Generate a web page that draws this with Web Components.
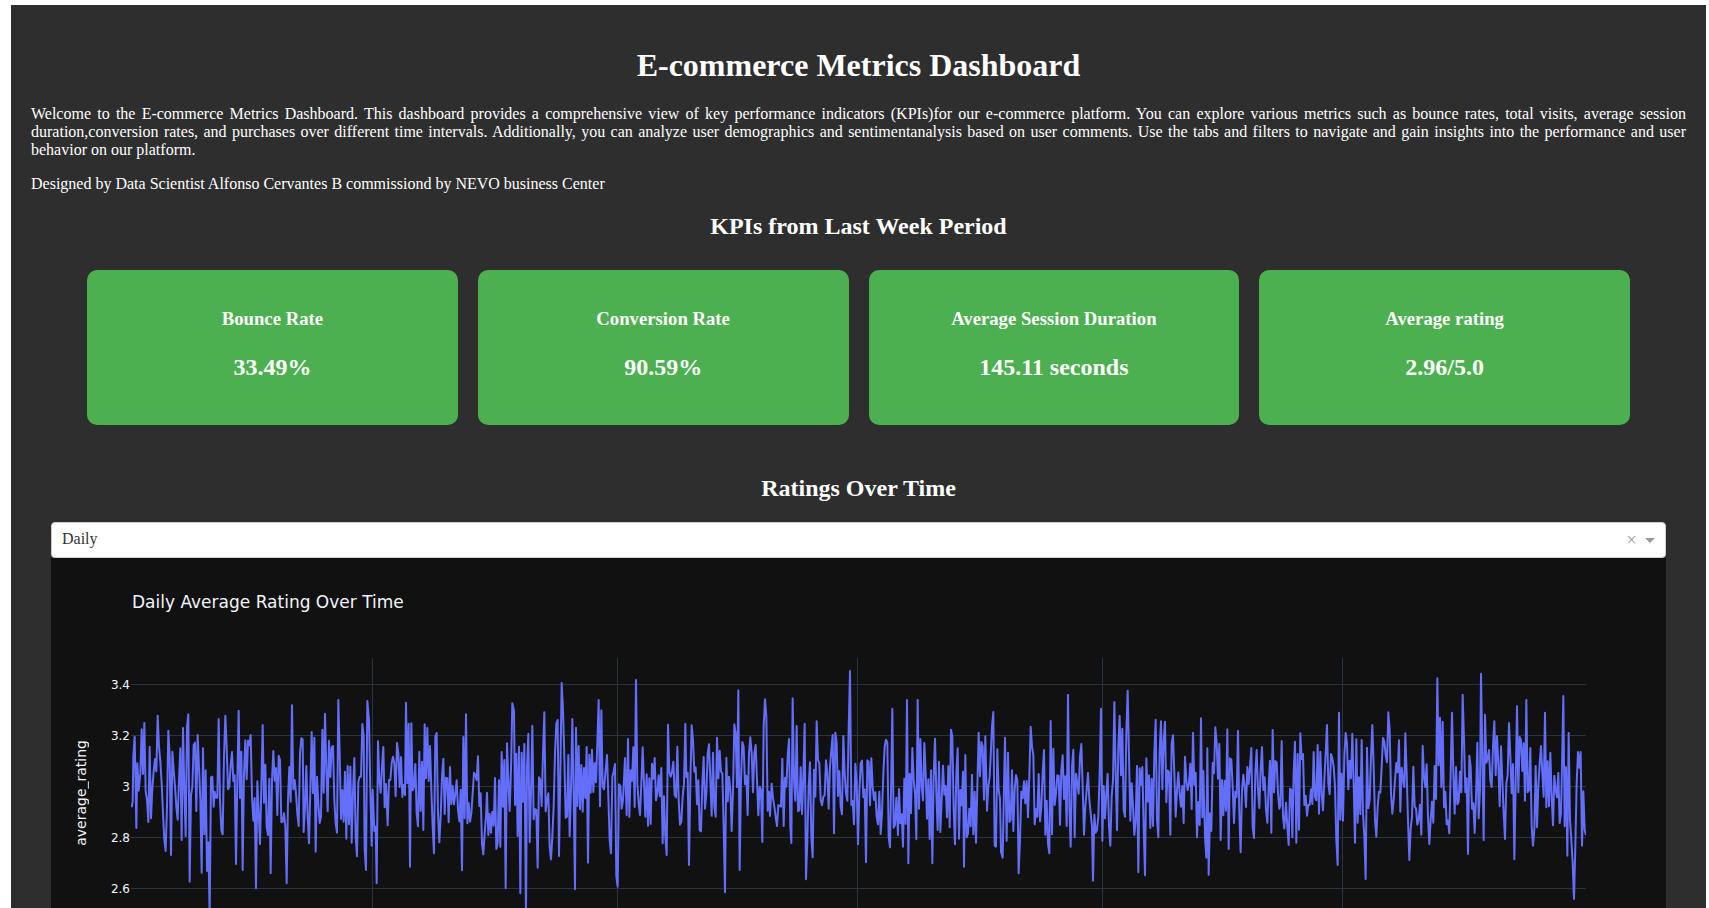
<!DOCTYPE html>
<html lang="en">
<head>
<meta charset="utf-8">
<title>E-commerce Metrics Dashboard</title>
<style>
body { margin: 5px 3px 0 11px; background: #fff; font-family: "Liberation Serif", "Times New Roman", serif; }
</style>
</head>
<body>
<metrics-dashboard></metrics-dashboard>

<script>
const define = (name, html, setup) => {
  const template = document.createElement('template');
  template.innerHTML = html;
  customElements.define(name, class extends HTMLElement {
    constructor() {
      super();
      this.attachShadow({ mode: 'open' }).append(template.content.cloneNode(true));
    }
    connectedCallback() { if (setup) setup(this.shadowRoot, this); }
  });
};

define('kpi-card', `
<style>
:host { display: block; flex: 1 1 0; box-sizing: border-box; padding: 20px; background: #4caf50; border-radius: 10px; text-align: center; }
h3 { margin: 18px 0 0; line-height: 22px; }
p { margin: 24px 0; font-size: 24px; line-height: 27px; font-weight: bold; }
</style>
<h3><slot name="label"></slot></h3>
<p><slot></slot></p>`);

define('period-select', `
<style>
:host { display: block; position: relative; }
select { display: block; width: 100%; height: 36px; box-sizing: border-box; padding: 0 52px 2px 10px; border: 1px solid #ccc; border-radius: 4px; background: #fff; color: #333; font: 16px/20px "Liberation Serif", "Times New Roman", serif; appearance: none; }
button { position: absolute; top: 9px; right: 26px; width: 17px; height: 18px; padding: 0; border: 0; background: none; color: #999; font: 18px/18px "Liberation Serif", serif; }
svg { position: absolute; top: 16px; right: 11px; pointer-events: none; }
</style>
<select aria-label="Time interval"><option>Daily</option></select>
<button type="button" aria-label="Clear value">×</button>
<svg width="10" height="5" viewBox="0 0 10 5" aria-hidden="true"><path d="M0 0H10L5 5Z" fill="#999"/></svg>`);

// Line vertices as x,y pairs; each run lists its own x offset. Units: 3 per pixel.
const runs = [
  [-213, `215,502 218,485 220,350 224,290 229,564 232,370 236,452 241,400 245,268 249,402 253,249 257,455 261,480 265,546 269,320 273,535 277,445 281,395 285,357 289,394 293,227 297,320 301,365 305,430 309,520 313,600 317,633 321,500 325,272 329,350 333,645 337,335 341,390 345,440 349,500 353,539 357,420 361,325 365,600 369,264 373,450 377,588 381,260 385,223 389,725 393,465 397,440 401,315 405,308 409,513 413,285 417,380 421,480 425,698 429,325 433,583 437,391 441,693 445,607 449,830 453,412 457,410 461,500 464,455 468,473 472,473 476,237 480,480 484,570 488,583 492,350 496,227 500,320 504,448 508,440 512,375 516,336 520,423 524,406 528,672 532,420 536,212 540,474 544,335 548,690 552,400 556,301 560,418 564,302 568,316 572,285 576,470 580,542 584,474 588,745 592,424 596,520 600,612 604,440 608,255 612,488 616,374 620,560 624,585 628,416 632,700 636,420 640,333 644,422 648,384 652,525 656,347 660,360 664,547 668,545 672,520 676,560 680,730 684,480 688,381 692,485 696,196 700,448 704,420 708,460 712,520 716,558 720,340 724,295 728,298 731,576 735,500 739,378 743,530 747,610 751,450 755,276 759,460 763,293 767,635 771,410 775,490 779,549 783,530 787,269 791,458 795,221 799,390 803,514 807,302 811,411 815,322 819,318 823,480 827,550 831,578 835,180 839,340 843,537 847,450 851,545 855,395 859,596 863,378 867,553 871,380 875,608 879,460 883,354 887,590 891,649 895,425 899,410 903,410 907,252 911,290 914,630 918,690 922,183 927,240 931,450 935,617 938,449 943,573 947,560 950,730`],
  [717, `20,730 24,304 28,420 32,458 36,380 40,321 44,502 48,432 53,556 57,420 61,420 65,370 69,350 73,370 77,469 81,309 85,340 89,441 93,351 97,471 101,435 105,465 108,188 112,430 116,251 120,680 124,250 128,451 132,440 136,372 140,520 144,559 148,335 152,513 156,365 160,570 164,253 168,415 172,264 176,423 180,318 184,450 188,560 192,640 196,290 200,279 204,520 208,607 212,530 216,410 220,356 224,522 228,413 232,415 236,547 240,381 244,492 248,438 252,493 256,460 260,421 264,510 268,544 272,449 276,691 280,291 284,535 288,223 292,550 296,489 300,545 304,520 308,460 312,398 316,405 320,420 324,349 328,498 332,460 336,610 340,643 344,580 348,530 351,458 355,585 359,521 363,578 367,515 371,557 375,414 379,627 383,610 387,421 391,620 395,336 399,500 403,360 407,745 411,310 415,420 419,513 423,390 427,190 432,212 435,495 439,341 443,588 447,320 451,760 455,338 459,485 463,312 468,830 471,380 475,281 479,607 483,460 487,257 491,538 495,507 499,510 503,683 507,412 511,420 515,498 519,340 523,217 527,514 531,480 535,460 539,620 543,658 547,590 551,500 555,340 559,250 563,240 567,648 571,400 575,129 579,210 583,350 587,533 591,530 595,345 599,588 603,450 607,237 611,470 615,748 618,263 622,498 626,318 630,508 634,375 638,515 642,384 646,474 650,321 654,668 658,344 662,458 666,329 670,456 674,369 678,427 682,310 686,180 690,499 694,211 698,440 702,448 706,400 711,345 715,470 719,600 723,640 727,410 731,395 735,372 739,710 743,740 747,433 751,438 755,506 759,480 765,354 770,525 774,297 778,531 782,391 786,423 790,322 794,501 798,120 802,430 806,490 810,525 814,430 818,322 822,430 826,530 830,403 834,557 838,415 842,552 846,371 850,416 854,354 858,481 862,460 866,406 870,469 874,384 878,610 882,469 886,590 890,645 894,254 898,395 902,410`],
  [1617, `2,410 6,395 10,365 14,465 18,472 22,320 26,480 30,554 34,545 38,470 42,430 46,251 49,411 53,398 57,675 61,430 65,256 69,300 73,395 77,382 81,493 85,421 89,570 93,574 97,430 101,351 105,506 109,460 113,340 117,313 121,420 125,527 129,338 133,500 137,530 141,293 145,415 149,332 153,395 157,400 161,560 165,757 169,353 173,484 177,410 181,450 185,573 189,450 193,253 197,280 201,442 205,151 209,690 213,420 217,306 221,320 225,433 229,407 233,525 237,340 241,292 245,340 249,457 253,340 257,315 261,420 265,526 269,440 273,450 277,606 281,260 285,178 289,230 293,512 297,455 300,528 305,431 309,475 313,500 317,530 321,558 325,495 329,498 333,500 337,356 341,558 345,413 349,440 353,350 357,297 361,560 364,609 368,175 372,420 376,482 380,258 384,514 388,510 392,382 396,522 400,410 404,251 408,718 412,600 416,440 420,367 424,590 428,652 432,389 436,470 440,244 444,360 448,370 452,480 456,496 460,470 464,466 468,361 472,400 476,506 480,380 484,330 488,285 492,580 496,278 500,310 504,468 508,393 512,500 516,523 520,288 524,400 528,460 532,482 536,270 540,93 544,495 548,483 552,553 556,371 560,430 564,613 568,460 572,370 576,362 580,472 584,448 588,667 592,361 596,365 600,496 604,355 608,440 612,480 616,457 620,530 624,553 628,455 632,582 636,520 640,400 644,320 648,299 652,308 656,590 660,622 664,400 667,206 671,563 675,555 679,473 684,585 687,447 691,550 695,523 699,620 703,416 707,552 711,180 715,670 719,401 723,520 727,324 731,420 735,460 739,598 743,180 747,506 751,297 755,440 759,481 763,309 767,400 771,536 775,418 779,597 783,391 787,670 791,410 795,296 799,460 803,570 807,365 811,576 815,480 819,377 823,464 827,438 831,532 835,378 839,562 843,269 847,290 851,510 855,613 859,400 863,325 867,596 871,450 875,496 879,395 882,680 886,345 890,592 894,580 898,506 902,559 906,404`],
  [2517, `6,404 10,583 14,455 18,608 22,440 26,278 30,409 34,306 38,318 42,479 46,289 51,512 55,440 59,410 62,350 66,260 70,216 74,617 78,620 82,328 86,450 90,475 93,635 98,653 102,440 105,293 110,602 114,338 118,546 122,540 126,391 130,573 134,450 138,405 142,420 146,700 150,600 154,455 158,475 162,424 166,490 170,423 174,532 178,410 182,260 186,320 190,345 194,553 198,507 202,530 206,402 210,544 214,500 218,400 222,330 226,584 230,482 234,610 238,640 242,243 246,583 250,326 254,495 258,460 262,406 266,408 270,554 274,390 278,346 282,477 286,409 290,558 294,164 298,500 302,620 306,380 310,329 314,592 318,401 322,430 326,461 330,350 334,312 338,440 342,584 346,500 350,450 354,399 358,480 362,520 366,560 369,722 373,524 377,578 381,570 385,530 389,400 393,206 397,602 401,438 405,535 409,460 413,401 417,560 421,617 425,470 429,420 433,186 437,400 441,571 445,320 449,227 453,406 457,266 461,510 465,530 469,280 473,152 477,350 481,542 485,430 489,500 493,585 497,540 501,378 505,697 509,385 513,434 517,381 521,560 525,706 529,355 533,485 537,406 541,564 545,416 549,558 553,340 557,239 561,540 565,592 569,330 573,244 577,448 581,300 585,245 589,487 593,391 597,396 601,584 605,310 609,286 613,400 617,530 621,450 625,397 629,460 633,500 637,438 641,549 645,350 649,420 653,450 657,430 661,371 665,507 669,278 673,434 677,398 681,592 685,486 689,555 693,235 697,532 700,393 705,590 709,653 712,325 716,704 720,520 724,573 728,369 732,400 736,262 740,310 744,416 748,312 752,600 756,420 760,526 764,422 768,512 772,268 776,627 780,355 784,359 788,440 792,549 796,455 800,471 804,272 808,520 812,637 816,450 820,404 824,440 828,501 832,381 836,432 840,380 844,324 848,560 852,594 856,400 860,330 864,450 868,504 872,390 876,321 880,450 884,412 888,510 892,548 896,440 900,362 904,578 908,270`],
  [3417, `8,270 12,457 16,363 20,368 24,460 28,506 31,497 35,303 39,530 43,565 48,488 52,560 56,615 60,446 64,450 67,592 71,400 75,305 79,608 83,342 87,569 91,280 95,357 99,342 103,495 107,467 111,527 115,495 119,494 123,448 127,492 131,336 135,470 139,481 143,315 147,521 151,335 155,460 159,511 163,420 167,340 171,255 175,430 179,463 183,342 187,355 191,380 195,440 199,600 203,675 207,218 211,539 215,401 219,542 223,350 227,279 231,310 235,448 239,362 243,415 247,281 251,430 255,608 259,298 263,548 267,412 271,523 275,300 279,520 283,590 287,717 291,323 295,505 299,480 303,350 307,255 311,380 315,540 319,590 323,500 327,455 331,458 335,380 339,294 343,305 347,345 351,367 355,217 359,270 363,460 367,521 371,480 375,420 379,369 383,397 387,301 391,515 395,383 399,420 403,441 406,280 410,400 414,540 418,660 422,566 426,530 430,380 434,500 438,505 442,554 446,540 450,494 454,584 458,317 462,410 466,441 470,373 474,530 478,612 482,540 486,485 490,548 494,378 498,477 502,115 506,376 510,233 514,441 518,245 522,502 526,455 530,553 534,541 538,580 542,400 546,218 550,400 554,521 558,381 562,493 566,485 570,395 574,457 578,164 582,300 586,457 590,415 594,642 598,347 602,380 606,506 610,490 614,579 618,470 622,308 626,535 630,450 633,101 637,340 641,600 645,224 649,368 653,357 657,330 661,420 665,441 669,320 673,244 677,406 681,288 685,370 689,499 693,319 697,420 701,520 705,597 709,430 713,405 717,249 721,350 725,460 729,372 733,658 737,430 741,199 745,457 749,291 753,300 757,393 761,310 765,482 769,180 773,457 777,450 781,324 785,560 789,617 793,570 797,378 801,562 805,440 809,370 813,318 817,400 821,470 825,218 829,502 833,364 837,499 841,338 845,470 849,556 853,407 857,450 861,472 865,399 869,549 873,520 877,330 880,168 884,559 888,382 892,647 896,279 900,540 904,600 908,670 912,777 916,620 920,430 924,336 928,383 932,336 936,617 940,454 944,570 948,585`]
];

define('rating-chart', `
<style>
:host { display: block; background: #111; color: #f2f5fa; font-family: Verdana, "DejaVu Sans", sans-serif; }
figure { margin: 0; padding: 0 80px; }
figcaption { height: 100px; box-sizing: border-box; padding: 34px 0 0 1px; font-size: 17px; line-height: 20px; }
.plot { position: relative; height: 250px; }
svg { display: block; width: 100%; height: 250px; overflow: hidden; }
.grid { stroke: #283442; stroke-width: 1; shape-rendering: crispEdges; }
.line { fill: none; stroke: #636efa; stroke-width: 2; stroke-linejoin: round; }
path { vector-effect: non-scaling-stroke; }
.ticks { position: absolute; top: 0; right: 100%; margin-right: 1px; padding-top: 19px; display: grid; grid-auto-rows: 16px; row-gap: 35px; font-size: 12px; line-height: 16px; text-align: right; }
.axis { position: absolute; top: 82px; right: 100%; margin-right: 42px; writing-mode: vertical-rl; transform: rotate(180deg); font-size: 14px; line-height: 16px; }
</style>
<figure>
  <figcaption><slot></slot></figcaption>
  <div class="plot">
    <div class="axis">average_rating</div>
    <div class="ticks"><span>3.4</span><span>3.2</span><span>3</span><span>2.8</span><span>2.6</span></div>
    <svg viewBox="0 0 4365 750" preserveAspectRatio="none" role="img" aria-label="Daily average rating">
      <path class="grid" d="M0 79H4365M0 232H4365M0 385H4365M0 538H4365M0 691H4365M724 0V750M1459 0V750M2179 0V750M2914 0V750M3634 0V750"/>
      <path class="line"/>
    </svg>
  </div>
</figure>`, root => {
  const points = runs.flatMap(([offset, pairs]) => pairs.split(' ').map(pair => {
    const [x, y] = pair.split(',').map(Number);
    return (x + offset) + ' ' + (y - 54);
  }));
  root.querySelector('.line').setAttribute('d', 'M' + points.join('L'));
});

define('metrics-dashboard', `
<style>
:host { display: block; padding: 20px 20px 0; background: #2e2e2e; color: #fff; }
h1 { margin: 22px 0 21px; font-size: 32px; line-height: 37px; text-align: center; }
p { margin: 0 0 16px; font-size: 16px; line-height: 18px; text-align: justify; }
h2 { margin: 20px 0; font-size: 24px; line-height: 27px; text-align: center; }
.cards { display: flex; gap: 20px; padding: 10px 56px 30px; }
.ratings { padding: 0 20px; }
</style>
<h1>E-commerce Metrics Dashboard</h1>
<p>Welcome to the E-commerce Metrics Dashboard. This dashboard provides a comprehensive view of key performance indicators (KPIs)for our e-commerce platform. You can explore various metrics such as bounce rates, total visits, average session duration,conversion rates, and purchases over different time intervals. Additionally, you can analyze user demographics and sentimentanalysis based on user comments. Use the tabs and filters to navigate and gain insights into the performance and user behavior on our platform.</p>
<p>Designed by Data Scientist Alfonso Cervantes B commissiond by NEVO business Center</p>
<h2>KPIs from Last Week Period</h2>
<div class="cards">
  <kpi-card><span slot="label">Bounce Rate</span>33.49%</kpi-card>
  <kpi-card><span slot="label">Conversion Rate</span>90.59%</kpi-card>
  <kpi-card><span slot="label">Average Session Duration</span>145.11 seconds</kpi-card>
  <kpi-card><span slot="label">Average rating</span>2.96/5.0</kpi-card>
</div>
<section class="ratings">
  <h2>Ratings Over Time</h2>
  <period-select></period-select>
  <rating-chart>Daily Average Rating Over Time</rating-chart>
</section>`);
</script>
</body>
</html>
